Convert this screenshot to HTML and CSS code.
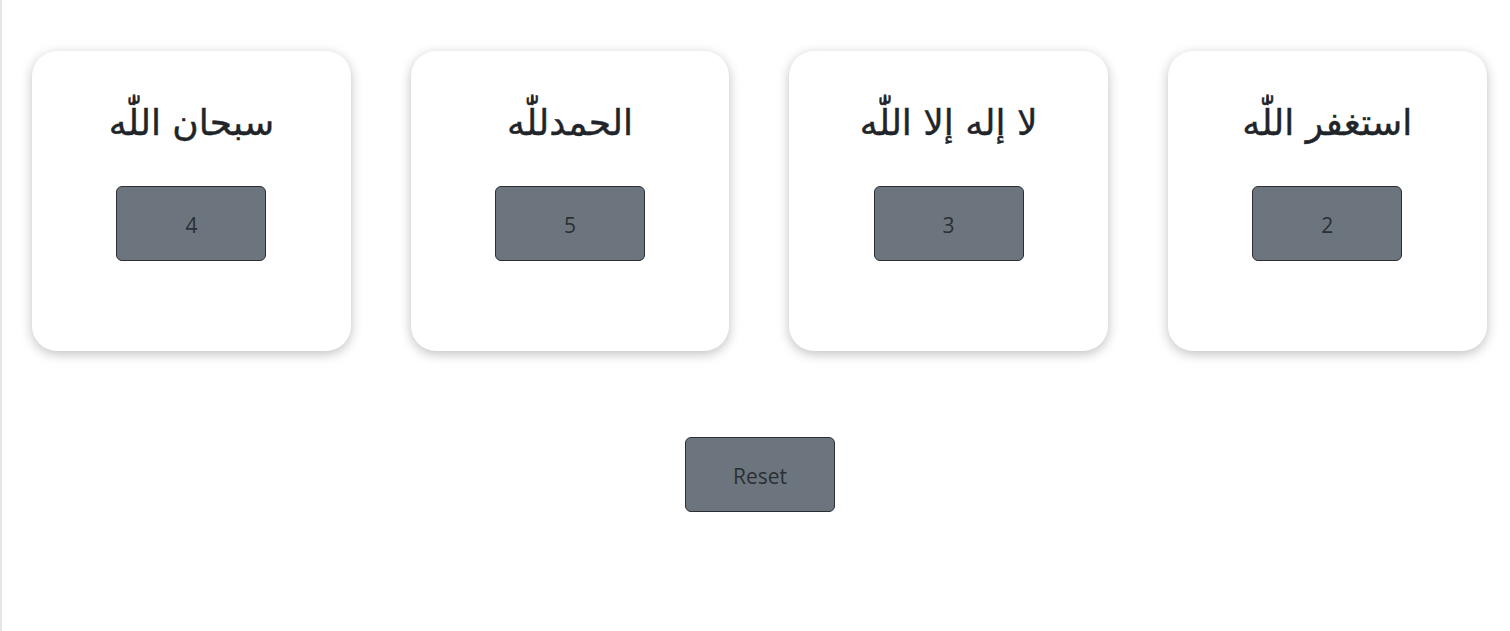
FILE: index.html
```html
<!DOCTYPE html>
<html lang="ar">
<head>
<meta charset="utf-8">
<title>Tasbih</title>
<link rel="stylesheet" href="styles.css">
</head>
<body>
<main class="page">
  <section class="cards">
    <div class="card">
      <h2 class="card-title" dir="rtl">سبحان اللّٰه</h2>
      <button class="btn">4</button>
    </div>
    <div class="card">
      <h2 class="card-title" dir="rtl">الحمدللّٰه</h2>
      <button class="btn">5</button>
    </div>
    <div class="card">
      <h2 class="card-title" dir="rtl">لا إله إلا اللّٰه</h2>
      <button class="btn">3</button>
    </div>
    <div class="card">
      <h2 class="card-title" dir="rtl">استغفر اللّٰه</h2>
      <button class="btn">2</button>
    </div>
  </section>
  <div class="reset-row">
    <button class="btn">Reset</button>
  </div>
</main>
</body>
</html>
```

FILE: styles.css
```css
html, body {
  margin: 0;
  padding: 0;
  background: #ffffff;
  height: 100%;
}
body {
  font-family: "Open Sans", "DejaVu Sans", sans-serif;
  color: #212529;
  border-left: 2px solid #e6e6e6;
  box-sizing: border-box;
}
.page {
  padding: 51px 0 0 30px;
}
.cards {
  display: flex;
  gap: 59.8px;
}
.card {
  width: 318.8px;
  height: 300px;
  box-sizing: border-box;
  background: #fff;
  border-radius: 25px;
  box-shadow: 0 3px 12px rgba(0, 0, 0, 0.25);
  display: flex;
  flex-direction: column;
  align-items: center;
  padding-top: 42px;
}
.card-title {
  margin: 0;
  font-family: "DejaVu Sans", sans-serif;
  font-weight: 400;
  font-size: 36px;
  line-height: 60px;
  height: 60px;
  color: #212529;
  -webkit-text-stroke: 0.4px #212529;
}
.btn {
  margin-top: 33px;
  width: 150px;
  height: 75px;
  background: #6c757d;
  border: 1px solid #2b2f33;
  border-radius: 6px;
  color: #2b2f33;
  font-family: "Open Sans", sans-serif;
  font-size: 21px;
  padding: 3px 0 0;
}
.reset-row {
  display: flex;
  justify-content: center;
  margin-top: 53px;
  width: 1456px;
}
.reset-row .btn {
  margin-top: 33px;
}
```
